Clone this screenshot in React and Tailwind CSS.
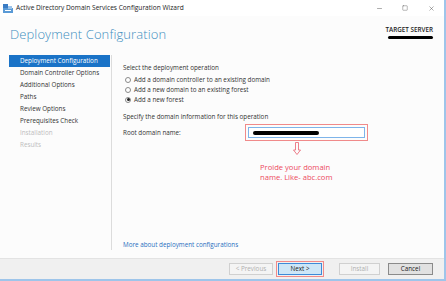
import { Minus, Square, X } from "lucide-react";

const navItems = [
    { label: "Deployment Configuration", active: true },
    { label: "Domain Controller Options" },
    { label: "Additional Options" },
    { label: "Paths" },
    { label: "Review Options" },
    { label: "Prerequisites Check" },
    { label: "Installation", disabled: true },
    { label: "Results", disabled: true },
];

const options = [
    { label: "Add a domain controller to an existing domain" },
    { label: "Add a new domain to an existing forest" },
    { label: "Add a new forest", checked: true },
];

function WizardIcon() {
    return (
        <svg width="10" height="9" viewBox="0 0 10 9">
            <rect x="0" y="0" width="5" height="4" fill="#3a7cc4" />
            <rect x="0" y="4" width="10" height="5" fill="#5a9ad6" />
            <rect x="5" y="2" width="4" height="3" fill="#9cc4ea" />
            <rect x="2" y="6" width="6" height="1" fill="#ffffff" />
        </svg>
    );
}

function Radio({ checked }) {
    return (
        <span className="w-[6px] h-[6px] rounded-full border border-[#8a8a8a] bg-white flex items-center justify-center">
            {checked && <span className="w-[3px] h-[3px] rounded-full bg-[#222]" />}
        </span>
    );
}

export default function App() {
    return (
        <div
            className="relative w-[446px] h-[281px] bg-[#fcfcfc] border-r-[2px] border-b-[2px] border-[#9ec5ea] flex flex-col overflow-hidden text-[#333]"
            style={{ fontFamily: '"Open Sans", "Noto Sans", sans-serif' }}
        >
            {/* title bar */}
            <div className="h-[16px] flex items-center bg-white pl-[3px] shrink-0">
                <WizardIcon />
                <span className="ml-[3px] text-[6.6px] text-[#222] leading-none">
                    Active Directory Domain Services Configuration Wizard
                </span>
                <div className="ml-auto flex items-center h-full text-[#444]">
                    <span className="w-[26px] flex justify-center"><Minus size={7} strokeWidth={1.5} /></span>
                    <span className="w-[26px] flex justify-center"><Square size={6} strokeWidth={1.5} /></span>
                    <span className="w-[26px] flex justify-center"><X size={7} strokeWidth={1.5} /></span>
                </div>
            </div>

            {/* header */}
            <div className="h-[39px] flex items-start pl-[10px] pr-[11px] shrink-0">
                <h1 className="mt-[12px] text-[13px] font-light text-[#3f8fbf] leading-none tracking-[0.1px]">
                    Deployment Configuration
                </h1>
                <div className="ml-auto mt-[11px] flex flex-col items-end">
                    <span className="text-[6.3px] font-semibold text-[#222] leading-none">TARGET SERVER</span>
                    <span className="mt-[3px] w-[45px] h-[3px] rounded-full bg-black" />
                </div>
            </div>

            {/* body */}
            <div className="flex flex-1 min-h-0">
                <nav className="w-[112px] pl-[9px] pb-[8px] flex flex-col">
                    <div className="flex flex-col border-r border-[#dcdcdc] h-full pr-[1px]">
                        {navItems.map((item) => (
                            <div
                                key={item.label}
                                className={
                                    item.active
                                        ? "h-[12px] flex items-center pl-[11px] bg-[#1a73c7] text-white text-[6.3px] leading-none"
                                        : item.disabled
                                        ? "h-[12px] flex items-center pl-[11px] text-[#bdbdbd] text-[6.3px] leading-none"
                                        : "h-[12px] flex items-center pl-[11px] text-[#333] text-[6.3px] leading-none"
                                }
                            >
                                {item.label}
                            </div>
                        ))}
                    </div>
                </nav>

                <main className="flex-1 flex flex-col pl-[11px] pr-[12px] pt-[10px] pb-[10px] text-[6.3px] leading-none">
                    <p>Select the deployment operation</p>
                    <div className="mt-[6px] flex flex-col gap-[3.8px] pl-[2px]">
                        {options.map((o) => (
                            <label key={o.label} className="flex items-center gap-[3px] h-[6px]">
                                <Radio checked={o.checked} />
                                <span>{o.label}</span>
                            </label>
                        ))}
                    </div>

                    <p className="mt-[11px]">Specify the domain information for this operation</p>
                    <div className="mt-[4px] flex items-start">
                        <span className="w-[122px] mt-[6px]">Root domain name:</span>
                        <div className="flex flex-col items-start">
                            <div className="border border-[#f08a8a] p-[2px]">
                                <div className="w-[117px] h-[11px] border border-[#7eb4ea] bg-white flex items-center pl-[4px]">
                                    <span className="w-[66px] h-[4px] rounded-full bg-black" />
                                </div>
                            </div>
                            <svg width="8" height="13" viewBox="0 0 8 13" className="mt-[1px] ml-[48px]">
                                <path d="M2.5 0.5 H5.5 V8 H7.5 L4 12.5 L0.5 8 H2.5 Z" fill="none" stroke="#e8606e" strokeWidth="0.8" />
                            </svg>
                            <p className="mt-[7px] ml-[15px] text-[7.6px] leading-[10px] text-[#ec4a5e]">
                                Proide your domain
                                <br />
                                name. Like- abc.com
                            </p>
                        </div>
                    </div>

                    <a className="mt-auto text-[#2a6fc0]">More about deployment configurations</a>
                </main>
            </div>

            {/* footer */}
            <div className="h-[21px] bg-[#f0f0f0] border-t border-[#e3e3e3] flex items-center justify-end pr-[11px] shrink-0 text-[6.3px] leading-none">
                <button className="w-[44px] h-[12px] border border-[#d0d0d0] bg-[#f4f4f4] text-[#b0b0b0]">&lt; Previous</button>
                <div className="ml-[3px] border border-[#f08a8a] p-[1px]">
                    <button className="w-[44px] h-[12px] border border-[#3c8ad8] bg-[#cde6f7] text-[#222]">Next &gt;</button>
                </div>
                <button className="ml-[15px] w-[41px] h-[12px] border border-[#d0d0d0] bg-[#f4f4f4] text-[#b0b0b0]">Install</button>
                <button className="ml-[8px] w-[45px] h-[12px] border border-[#8a8a8a] bg-[#e1e1e1] text-[#222]">Cancel</button>
            </div>

            <span className="absolute right-[-2px] top-[133px] w-[2px] h-[28px] bg-[#7a2440]" />
        </div>
    );
}
